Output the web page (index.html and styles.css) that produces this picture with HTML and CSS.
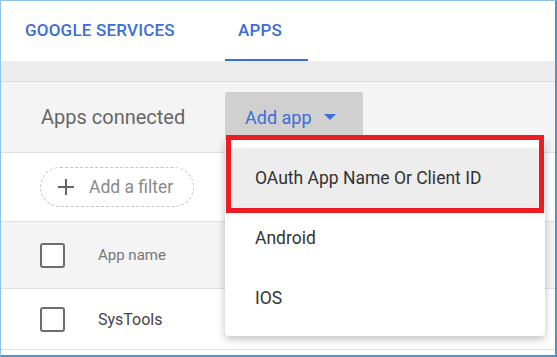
FILE: index.html
```html
<!DOCTYPE html>
<html lang="en">
<head>
    <meta charset="UTF-8">
    <meta name="viewport" content="width=device-width, initial-scale=1.0">
    <title>Apps</title>
    <link rel="stylesheet" href="styles.css">
</head>
<body>
    <div class="frame">
        <div class="tabs">
            <a class="tab">GOOGLE SERVICES</a>
            <a class="tab active">APPS</a>
        </div>
        <div class="band"></div>

        <div class="panel-head">
            <span class="panel-title">Apps connected</span>
            <div class="add-app">
                <span>Add app</span>
                <span class="caret"></span>
            </div>
        </div>

        <div class="filter-row">
            <div class="filter-pill">
                <svg width="16" height="16" viewBox="0 0 16 16">
                    <path d="M8 0v16M0 8h16" stroke="#666" stroke-width="2" fill="none"/>
                </svg>
                <span>Add a filter</span>
            </div>
        </div>

        <div class="table-row table-head">
            <span class="checkbox"></span>
            <span>App name</span>
        </div>
        <div class="table-row">
            <span class="checkbox"></span>
            <span class="app-name">SysTools</span>
        </div>

        <ul class="menu">
            <li class="menu-item selected">OAuth App Name Or Client ID</li>
            <li class="menu-item">Android</li>
            <li class="menu-item">IOS</li>
        </ul>
    </div>
</body>
</html>
```

FILE: styles.css
```css
body {
    margin: 0;
    font-family: Roboto, "Liberation Sans", Arial, sans-serif;
}
.frame {
    position: relative;
    width: 557px;
    height: 357px;
    box-sizing: border-box;
    border-top: 1px solid #8fc3ea;
    border-left: 1px solid #8fc3ea;
    border-right: 2px solid #4f93c9;
    border-bottom: 2px solid #4f93c9;
    background: #fff;
    overflow: hidden;
}
.tabs {
    display: flex;
    height: 60px;
    background: #fff;
}
.tab {
    display: flex;
    align-items: center;
    box-sizing: border-box;
    height: 60px;
    padding-left: 24px;
    padding-bottom: 2px;
    color: #3a6fd8;
    font-size: 17px;
    font-weight: 500;
    letter-spacing: 0.2px;
    width: 224px;
}
.tab.active {
    width: 83px;
    padding-left: 13px;
    border-bottom: 2px solid #3a6fd8;
    padding-bottom: 0;
}
.band {
    height: 20px;
    background: #ededed;
    border-bottom: 1px solid #dcdcdc;
}
.panel-head {
    display: flex;
    align-items: flex-start;
    height: 70px;
    background: #f4f4f4;
    border-bottom: 1px solid #e0e0e0;
}
.panel-title {
    width: 184px;
    padding-left: 40px;
    line-height: 70px;
    font-size: 20px;
    color: #666;
}
.add-app {
    display: flex;
    align-items: center;
    box-sizing: border-box;
    width: 138px;
    height: 50px;
    margin-top: 10px;
    padding-left: 20px;
    background: #d0d0d0;
    border-radius: 3px 3px 0 0;
    color: #3a6fd8;
    font-size: 18px;
}
.caret {
    margin-left: 12px;
    width: 0;
    height: 0;
    border-left: 6px solid transparent;
    border-right: 6px solid transparent;
    border-top: 6px solid #3a6fd8;
}
.filter-row {
    display: flex;
    align-items: center;
    height: 68px;
    padding-left: 39px;
    border-bottom: 1px solid #e0e0e0;
}
.filter-pill {
    display: flex;
    align-items: center;
    gap: 15px;
    box-sizing: border-box;
    width: 154px;
    height: 40px;
    padding-left: 17px;
    border: 1px dashed #c4c4c4;
    border-radius: 20px;
    color: #8a8a8a;
    font-size: 17.5px;
}
.table-row {
    display: flex;
    align-items: center;
    gap: 33px;
    height: 60px;
    padding-left: 39px;
    border-bottom: 1px solid #e0e0e0;
}
.table-head {
    height: 66px;
    background: #f4f4f4;
    color: #777;
    font-size: 15px;
}
.app-name {
    color: #444;
    font-size: 16px;
}
.checkbox {
    box-sizing: border-box;
    width: 25px;
    height: 25px;
    border: 2px solid #6d6d6d;
    border-radius: 3px;
    background: #fff;
}
.menu {
    position: absolute;
    top: 139px;
    left: 224px;
    width: 320px;
    margin: 0;
    padding: 8px 0;
    list-style: none;
    background: #fff;
    border-radius: 0 0 4px 4px;
    box-shadow: 0 3px 8px rgba(0, 0, 0, 0.25);
}
.menu-item {
    position: relative;
    height: 60px;
    line-height: 60px;
    padding-left: 30px;
    color: #333;
    font-size: 17.5px;
}
.menu-item.selected {
    background: #ededed;
}
.menu-item.selected::after {
    content: "";
    position: absolute;
    top: -13px;
    bottom: -5px;
    left: 1px;
    right: 1px;
    border: 5px solid #ed1c24;
}
```
